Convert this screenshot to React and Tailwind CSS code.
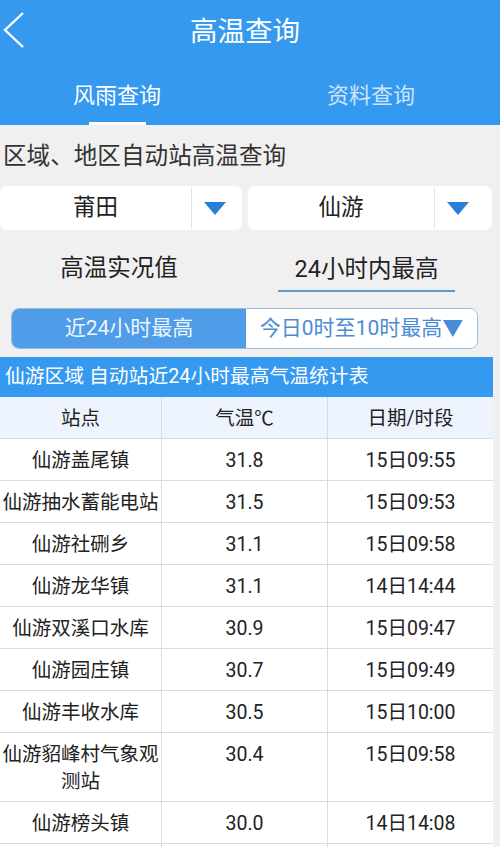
import React from "react";

const rows = [
  ["仙游盖尾镇", "31.8", "15日09:55"],
  ["仙游抽水蓄能电站", "31.5", "15日09:53"],
  ["仙游社硎乡", "31.1", "15日09:58"],
  ["仙游龙华镇", "31.1", "14日14:44"],
  ["仙游双溪口水库", "30.9", "15日09:47"],
  ["仙游园庄镇", "30.7", "15日09:49"],
  ["仙游丰收水库", "30.5", "15日10:00"],
  ["仙游貂峰村气象观测站", "30.4", "15日09:58"],
  ["仙游榜头镇", "30.0", "14日14:08"],
  ["", "", ""],
];

function Select({ label, className, arrowW }) {
  return (
    <div className={"flex h-[44px] items-center rounded-[7px] bg-white " + className}>
      <div className="flex-1 text-center text-[22.5px] text-[#222]">{label}</div>
      <div className="h-[40px] w-px bg-[#e2e2e2]" />
      <div className={"flex items-center pl-[12px] " + arrowW}>
        <svg width="22" height="13" viewBox="0 0 22 13">
          <polygon points="0,0 22,0 11,13" fill="#2a7fd6" />
        </svg>
      </div>
    </div>
  );
}

export default function App() {
  return (
    <div
      className="h-[847px] w-[500px] overflow-hidden bg-[#f0f0f0]"
      style={{ fontFamily: 'Roboto, "Noto Sans CJK SC", sans-serif' }}
    >
      <div className="bg-[#3599ef]">
        <div className="relative flex h-[62px] items-center justify-center">
          <svg className="absolute left-[2px] top-[11px]" width="24" height="38" viewBox="0 0 24 38">
            <polyline points="21,2 3,19 21,36" fill="none" stroke="white" strokeWidth="2.4" />
          </svg>
          <div className="pr-[10px] pt-[1px] text-[27.5px] text-white">高温查询</div>
        </div>
        <div className="flex h-[63px]">
          <div className="relative flex w-[234px] items-center justify-center pt-[3px] text-[22px] text-white">
            风雨查询
            <div className="absolute bottom-0 left-[89px] h-[3px] w-[57px] bg-white" />
          </div>
          <div className="flex flex-1 items-center justify-center pl-[8px] pt-[3px] text-[22px] text-[#cde4fa]">
            资料查询
          </div>
        </div>
      </div>

      <div className="flex h-[61px] items-center pl-[3px] pt-[2px] text-[23.6px] text-[#333]">
        区域、地区自动站高温查询
      </div>

      <div className="flex gap-[6px] pr-[8px]">
        <Select label="莆田" className="w-[242px]" arrowW="w-[50px]" />
        <Select label="仙游" className="flex-1" arrowW="w-[57px]" />
      </div>

      <div className="flex h-[70px] items-center pt-[8px]">
        <div className="flex w-[238px] justify-center text-[23.5px] text-[#222]">高温实况值</div>
        <div className="flex flex-1 justify-center pr-[5px]">
          <div className="border-b-2 border-[#5a9cc4] px-[17px] pb-[3px] pt-[6px] text-[23.5px] text-[#222]">
            24小时内最高
          </div>
        </div>
      </div>

      <div className="mx-[11px] mt-[8px] flex h-[41px] w-[467px] overflow-hidden rounded-[8px] border border-[#9cbcdc]">
        <div className="flex w-[234px] items-center justify-center bg-[#4f9de8] text-[21px] text-[#eef5fd]">
          近24小时最高
        </div>
        <div className="flex flex-1 items-center justify-center bg-white text-[21px] text-[#4a8cd4]">
          今日0时至10时最高▼
        </div>
      </div>

      <div className="mt-[8px] w-[493px]">
        <div className="flex h-[40px] items-center bg-[#3599ef] pl-[5px] text-[19.8px] text-white">
          仙游区域 自动站近24小时最高气温统计表
        </div>
        <div className="grid grid-cols-[162px_166px_165px] bg-[#edf4fd] text-[19.5px] text-[#222]">
          <div className="flex h-[42px] items-center justify-center border-b border-r border-[#d6dde6] pt-[3px]">站点</div>
          <div className="flex h-[42px] items-center justify-center border-b border-r border-[#d6dde6] pt-[3px]">气温℃</div>
          <div className="flex h-[42px] items-center justify-center border-b border-[#d6dde6] pt-[3px]">日期/时段</div>
        </div>
        <div className="bg-white text-[19.5px] leading-[27px] text-[#222]">
          {rows.map((r, i) => (
            <div key={i} className="grid min-h-[42px] grid-cols-[162px_166px_165px] border-b border-[#dcdcdc]">
              <div className="border-r border-[#dcdcdc] px-[1px] pb-[6px] pt-[8px] text-center">{r[0]}</div>
              <div className="border-r border-[#dcdcdc] pb-[6px] pt-[8px] text-center">{r[1]}</div>
              <div className="pb-[6px] pt-[8px] text-center">{r[2]}</div>
            </div>
          ))}
        </div>
      </div>
    </div>
  );
}
